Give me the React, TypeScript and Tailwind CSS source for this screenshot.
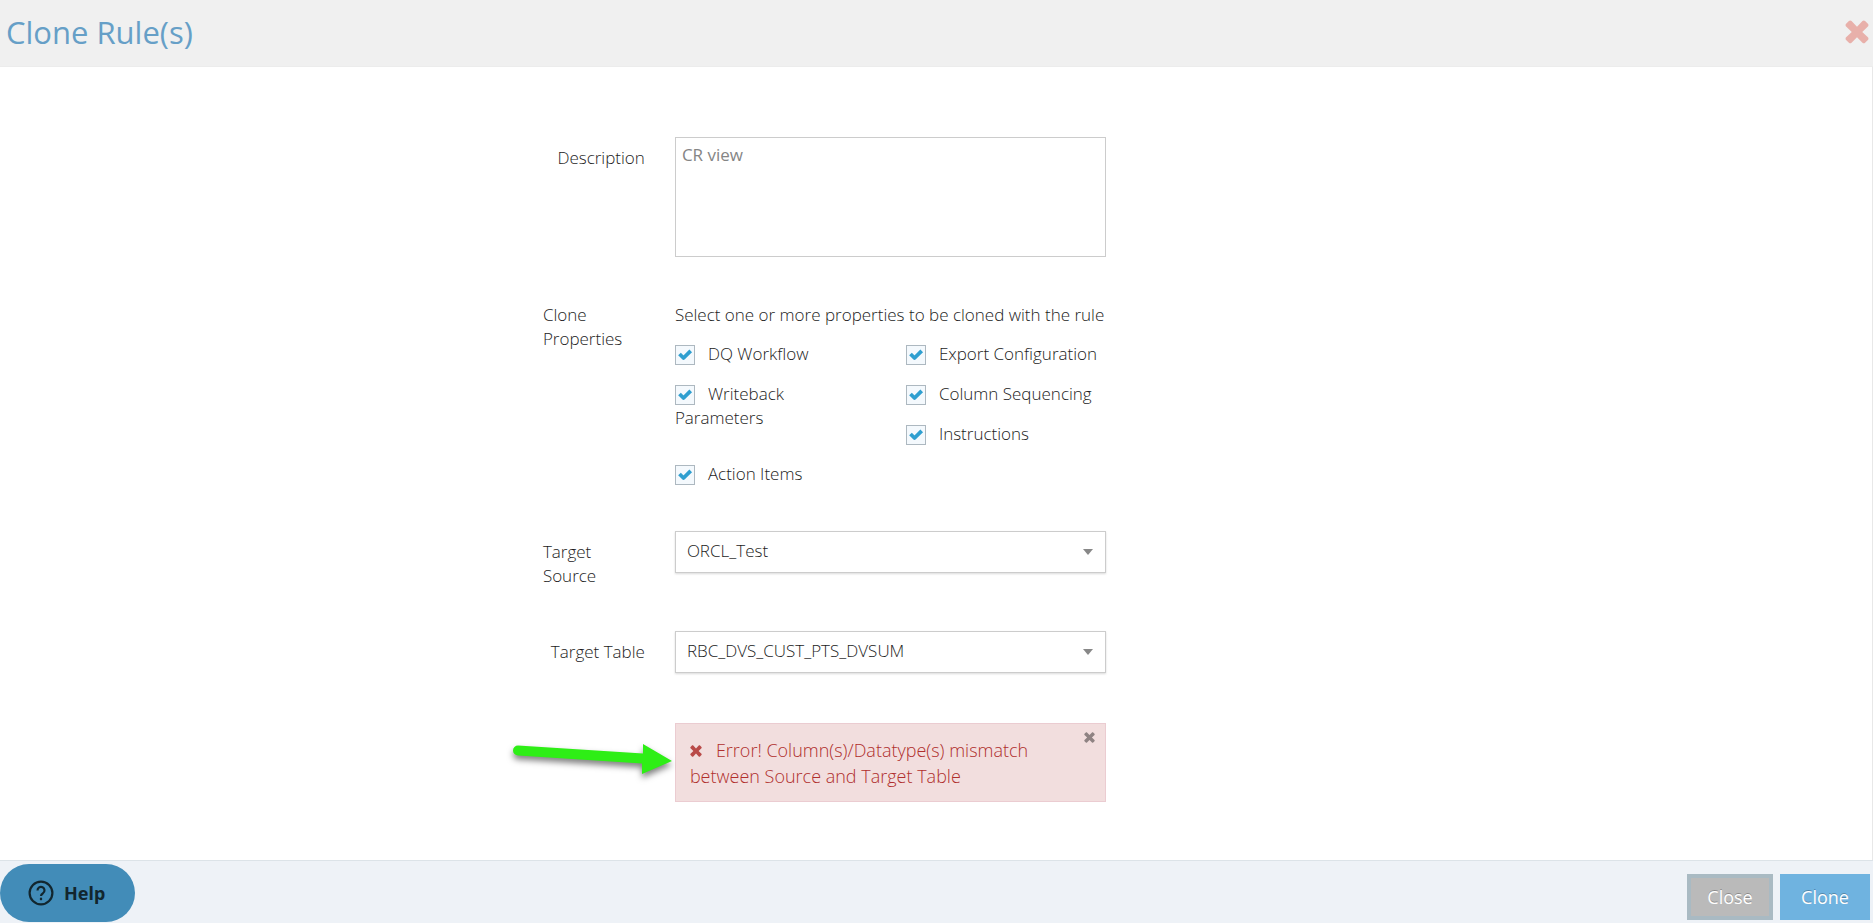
import { useState } from "react";

const LEFT_PROPS = ["DQ Workflow", "Writeback Parameters", "Action Items"];
const RIGHT_PROPS = ["Export Configuration", "Column Sequencing", "Instructions"];

// heavy "times" glyph
function TimesIcon({ className }: { className: string }) {
  return (
    <svg viewBox="0 0 22 22" className={className} fill="currentColor" aria-hidden="true">
      <path d="M21.5 17.1c0 .4-.2.9-.5 1.200l-2.600 2.600c-.3.3-.8.5-1.200.5s-.9-.2-1.200-.5L11 15.800l-5 5.100c-.3.3-.8.5-1.200.5s-.9-.2-1.200-.5L1 18.300c-.3-.3-.5-.8-.5-1.200s.2-.9.5-1.200L6.200 11 1 5.900c-.3-.3-.5-.8-.5-1.200s.2-.9.5-1.200L3.600 1c.3-.3.8-.5 1.200-.5s.9.2 1.200.5l5 5.200L16 1c.3-.3.8-.5 1.200-.5s.9.2 1.200.5L21 3.500c.3.3.5.8.5 1.200s-.2.9-.5 1.200L15.800 11l5.200 4.900c.3.3.5.8.5 1.200z" />
    </svg>
  );
}

function PropertyCheck({ label, className }: { label: string; className: string }) {
  const [checked, setChecked] = useState(true);
  return (
    <label className={`block ${className}`}>
      <span className="relative mr-[13px] inline-block size-5 align-middle">
        <input
          type="checkbox"
          checked={checked}
          onChange={() => setChecked(!checked)}
          className="block size-5 appearance-none border border-[#adb8c0] bg-[#f4f9fd]"
        />
        {checked && (
          <svg
            viewBox="0 0 20 20"
            className="pointer-events-none absolute inset-0 size-5 fill-none stroke-[#2f9fd0]"
            strokeWidth="3.8"
            strokeLinejoin="round"
            aria-hidden="true"
          >
            <path d="M4.500 9l4 4 7.200-7.200" />
          </svg>
        )}
      </span>
      {label}
    </label>
  );
}

function SelectBox({ id, value }: { id: string; value: string }) {
  return (
    <div className="relative">
      <select
        id={id}
        className="block h-[42px] w-full appearance-none border border-[#ccc] bg-white pr-8 pb-0.5 pl-[11px] shadow-[0_1px_2px_rgba(0,0,0,0.15)]"
      >
        <option>{value}</option>
      </select>
      <svg
        viewBox="0 0 10 6"
        className="pointer-events-none absolute top-[18px] right-[13px] h-[6px] w-[10px] fill-[#888]"
        aria-hidden="true"
      >
        <path d="M0 0h10L5 6z" />
      </svg>
    </div>
  );
}

export default function App() {
  const [description, setDescription] = useState("CR view");
  const [showError, setShowError] = useState(true);

  return (
    <div className="flex min-h-screen flex-col bg-white font-['Open_Sans',sans-serif] text-base leading-6">
      <header className="flex h-[67px] items-center justify-between border-b border-[#ececec] bg-[#f0f0f0] pr-1 pb-0.5 pl-[6px]">
        <h1 className="text-[31px] leading-10 text-[#669fc7]">Clone Rule(s)</h1>
        <button type="button" aria-label="Close dialog" className="text-[#e8b0aa]">
          <TimesIcon className="size-6" />
        </button>
      </header>

      <main className="flex-1 border-r border-[#e8e8e8] pt-[70px]">
        <form className="ml-[29%] grid grid-cols-[102px_431px] gap-x-[30px] text-[17px] font-light text-[#1c1c1c]">
          <label htmlFor="description" className="justify-self-end pt-[9px]">
            Description
          </label>
          <textarea
            id="description"
            value={description}
            onChange={(e) => setDescription(e.target.value)}
            className="mb-[46px] h-[120px] resize-none border border-[#ccc] px-[6px] py-[5px] text-[17px] font-normal text-[#858585]"
          />

          <div id="clone-properties" className="justify-self-end">
            Clone Properties
          </div>
          <div role="group" aria-labelledby="clone-properties" className="mb-[45px]">
            <p className="whitespace-nowrap">Select one or more properties to be cloned with the rule</p>
            <div className="mt-[15px] grid grid-cols-[231px_200px]">
              <div>
                <PropertyCheck label={LEFT_PROPS[0]} className="h-10" />
                <PropertyCheck label={LEFT_PROPS[1]} className="h-20 w-[150px]" />
                <PropertyCheck label={LEFT_PROPS[2]} className="h-6" />
              </div>
              <div>
                {RIGHT_PROPS.map((p) => (
                  <PropertyCheck key={p} label={p} className="h-10" />
                ))}
              </div>
            </div>
          </div>

          <label htmlFor="source" className="justify-self-end pt-[9px]">
            Target Source
          </label>
          <div className="h-[100px]">
            <SelectBox id="source" value="ORCL_Test" />
          </div>

          <label htmlFor="table" className="justify-self-end pt-[9px]">
            Target Table
          </label>
          <div className="h-[92px]">
            <SelectBox id="table" value="RBC_DVS_CUST_PTS_DVSUM" />
          </div>

          {showError && (
            <div
              role="alert"
              className="relative col-start-2 h-[79px] border border-[#ebccd1] bg-[#f2dede] py-[13px] pr-10 pl-[14px] text-[18px] leading-[26px] text-[#b02e2c]"
            >
              <TimesIcon className="mr-[14px] inline-block size-3 align-baseline text-[#b94a48]" />
              Error! Column(s)/Datatype(s) mismatch between Source and Target Table
              <button
                type="button"
                aria-label="Dismiss"
                onClick={() => setShowError(false)}
                className="absolute top-2 right-[10px] text-[#8f8383]"
              >
                <TimesIcon className="block size-[11px]" />
              </button>
              {/* callout arrow */}
              <svg
                viewBox="0 0 170 50"
                className="pointer-events-none absolute top-[11px] right-full h-[50px] w-[170px]"
                aria-hidden="true"
              >
                <path
                  d="M12 10.500L137 18.500V9L166 26 136 39V28.500L12 20.500a5 5 0 0 1 0-10z"
                  fill="#2eee16"
                  className="drop-shadow-[0_4px_3px_rgba(0,0,0,0.5)]"
                />
              </svg>
            </div>
          )}
        </form>
      </main>

      <footer className="flex h-[63px] items-start justify-between border-t border-[#dce3e8] bg-[#eef2f7] pr-[3px]">
        <button
          type="button"
          className="mt-[3px] flex h-[58px] w-[135px] items-center gap-[10px] rounded-full bg-[#428cb8] pl-7 font-['Noto_Sans',sans-serif] text-[18px] font-bold text-[#12262e]"
        >
          <svg viewBox="0 0 26 26" className="size-[26px] fill-none stroke-current" strokeWidth="2.200" aria-hidden="true">
            <circle cx="13" cy="13" r="11.400" />
            <path d="M9.500 10.400a3.500 3.500 0 1 1 5.500 2.800c-1.300.8-2 1.400-2 2.800" />
            <path d="M13 17.700v2.500" />
          </svg>
          Help
        </button>
        <div className="mt-[13px] flex gap-[7px] text-[18px] text-white">
          <button
            type="button"
            className="h-[46px] w-[86px] border-4 border-[#a9bac3] bg-[#bababa] text-shadow-[0_-1px_0_rgba(0,0,0,0.25)]"
          >
            Close
          </button>
          <button type="button" className="h-[46px] w-[90px] bg-[#6fb3e0] text-shadow-[0_-1px_0_rgba(0,0,0,0.25)]">
            Clone
          </button>
        </div>
      </footer>
    </div>
  );
}
